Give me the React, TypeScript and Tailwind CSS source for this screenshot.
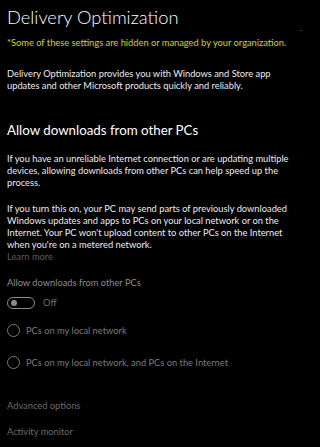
export default function App() {
  return (
    <div
      className="relative h-[447px] w-[320px] overflow-hidden bg-black pl-[7px] pr-[20px] text-[9.3px] leading-[12px] text-[#ececec]"
      style={{ fontFamily: 'Lato, "Open Sans", sans-serif' }}
    >
      <h1 className="pt-[3px] text-[18.3px] font-light leading-[28px] text-white">Delivery Optimization</h1>
      {/* stray red pixel from the capture */}
      <span className="absolute left-[300px] top-[30px] h-[1px] w-[2px] bg-[#8b1a1a]" />
      <p className="mt-[6px] whitespace-nowrap text-[#d6d200]">
        *Some of these settings are hidden or managed by your organization.
      </p>

      <p className="mt-[19px]">
        Delivery Optimization provides you with Windows and Store app updates and other Microsoft products quickly and
        reliably.
      </p>

      <h2 className="mt-[28px] text-[13.3px] leading-[20px] text-white">Allow downloads from other PCs</h2>

      <p className="mt-[13px]">
        If you have an unreliable Internet connection or are updating multiple devices, allowing downloads from other
        PCs can help speed up the process.
      </p>
      <p className="mt-[14px]">
        If you turn this on, your PC may send parts of previously downloaded Windows updates and apps to PCs on your
        local network or on the Internet. Your PC won't upload content to other PCs on the Internet when you're on a
        metered network.
      </p>
      <p className="text-[#5c5c5c]">Learn more</p>

      <p className="mt-[14px] text-[#8c8c8c]">Allow downloads from other PCs</p>
      <div className="mt-[7px] flex h-[13px] items-center gap-[8px]">
        <div className="flex h-[12px] w-[28px] items-center rounded-full border-[1.5px] border-[#8a8a8a] pl-[3px]">
          <div className="h-[6px] w-[6px] rounded-full bg-[#8a8a8a]" />
        </div>
        <span className="text-[#707070]">Off</span>
      </div>

      <div className="mt-[15px] flex h-[13px] items-center gap-[6px]">
        <div className="h-[13px] w-[13px] rounded-full border-[1.5px] border-[#7a7a7a]" />
        <span className="text-[#7a7a7a]">PCs on my local network</span>
      </div>
      <div className="mt-[19px] flex h-[13px] items-center gap-[6px]">
        <div className="h-[13px] w-[13px] rounded-full border-[1.5px] border-[#7a7a7a]" />
        <span className="text-[#7a7a7a]">PCs on my local network, and PCs on the Internet</span>
      </div>

      <p className="mt-[31px] text-[#6a6a6a]">Advanced options</p>
      <p className="mt-[14px] text-[#6a6a6a]">Activity monitor</p>
    </div>
  );
}
